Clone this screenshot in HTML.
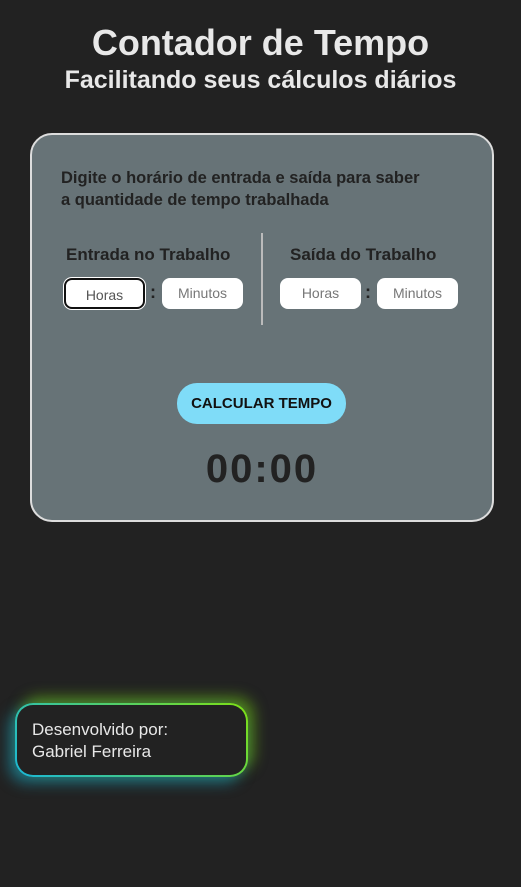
<!DOCTYPE html>
<html><head><style>
body{margin:0;width:521px;height:887px;background:#222222;font-family:"Liberation Sans",sans-serif;position:relative;overflow:hidden}
h1{position:absolute;top:22px;left:0;width:521px;text-align:center;margin:0;color:#e8e8e8;font-size:36px;font-weight:bold}
h2{position:absolute;top:66px;left:0;width:521px;text-align:center;margin:0;color:#e8e8e8;font-size:25px;font-weight:bold}
.card{position:absolute;left:30px;top:133px;width:464px;height:389px;background:#677377;border:2px solid #ddd;border-radius:22px;box-sizing:border-box}
.desc{position:absolute;left:29px;top:32px;width:400px;font-size:16.5px;font-weight:bold;color:#222;line-height:22px}
.col{position:absolute;top:110px;text-align:center;font-size:17px;font-weight:bold;color:#222}
.div{position:absolute;left:229px;top:98px;width:2px;height:92px;background:#bbb}
.in{position:absolute;top:143px;width:81px;height:31px;background:#fff;border-radius:8px;box-sizing:border-box;text-align:center;line-height:31px;font-size:14px;color:#777;font-weight:normal}
.colon{position:absolute;top:147px;font-size:18px;font-weight:bold;color:#222}
.btn{position:absolute;left:145px;top:248px;width:169px;height:41px;background:#7fdcf8;border-radius:20px;text-align:center;line-height:41px;font-size:15px;font-weight:bold;color:#111}
.t{position:absolute;left:0;width:460px;top:312px;text-align:center;font-size:40px;font-weight:bold;color:#222;letter-spacing:2px}
.dev{position:absolute;left:15px;top:703px;width:233px;height:74px;border-radius:18px;background:#222;box-sizing:border-box;border:2px solid transparent;background:linear-gradient(#222,#222) padding-box,linear-gradient(45deg,#1ab8d8,#7ee014) border-box;box-shadow:-6px 6px 14px rgba(26,184,216,.5),6px -6px 14px rgba(126,224,20,.5);color:#e8e8e8;font-size:17px;padding:14px 0 0 15px;line-height:22px}
</style></head><body>
<h1>Contador de Tempo</h1>
<h2>Facilitando seus cálculos diários</h2>
<div class="card">
<div class="desc">Digite o horário de entrada e saída para saber<br>a quantidade de tempo trabalhada</div>
<div class="col" style="left:34px">Entrada no Trabalho</div>
<div class="col" style="left:258px">Saída do Trabalho</div>
<div class="div"></div>
<div class="in" style="left:32px;border:2px solid #111;box-shadow:0 0 0 1px #fff;color:#555">Horas</div>
<div class="colon" style="left:118px">:</div>
<div class="in" style="left:130px">Minutos</div>
<div class="in" style="left:248px">Horas</div>
<div class="colon" style="left:333px">:</div>
<div class="in" style="left:345px">Minutos</div>
<div class="btn">CALCULAR TEMPO</div>
<div class="t">00:00</div>
</div>
<div class="dev">Desenvolvido por:<br>Gabriel Ferreira</div>
</body></html>
